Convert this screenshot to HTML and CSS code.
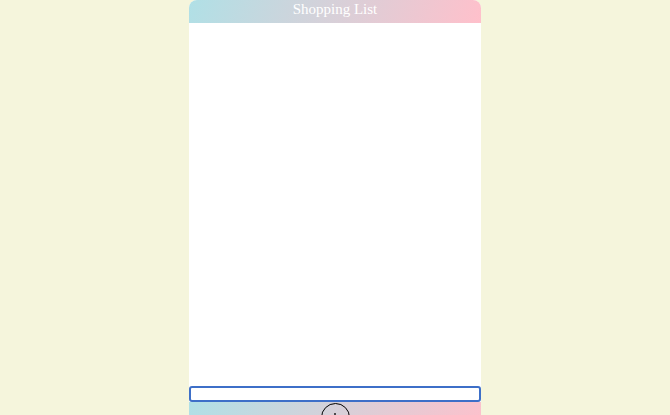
FILE: index.html
```html
<!DOCTYPE html>
<html>
<head>
<meta charset="utf-8">
<title>Shopping List</title>
<link rel="stylesheet" href="styles.css">
</head>
<body>
<div class="app">
  <header class="app-header">Shopping List</header>
  <ul class="items"></ul>
  <input class="new-item" type="text">
  <footer class="app-footer">
    <button class="add-btn" type="button" aria-label="Add item">
      <svg width="12" height="12" viewBox="0 0 12 12"><path d="M6 1v10M1 6h10" stroke="#111" stroke-width="1.4" fill="none"/></svg>
    </button>
  </footer>
</div>
</body>
</html>
```
FILE: styles.css
```css
html, body {
  margin: 0;
  padding: 0;
  background: #f5f5dc;
}
body {
  font-family: "Liberation Serif", "Times New Roman", serif;
}
.app {
  width: 292px;
  margin: 0 auto;
  display: flex;
  flex-direction: column;
  background: #ffffff;
  border-radius: 8px 8px 0 0;
}
.app-header {
  height: 23px;
  line-height: 19px;
  box-sizing: border-box;
  text-align: center;
  color: #ffffff;
  font-size: 15px;
  background: linear-gradient(110deg, #b0e0e6 0%, #ffc0cb 100%);
  border-radius: 8px 8px 0 0;
}
.items {
  margin: 0;
  padding: 0;
  list-style: none;
  height: 363px;
}
.new-item {
  box-sizing: border-box;
  width: 100%;
  height: 16px;
  margin: 0;
  padding: 0 2px;
  border: 2px solid #3d6fc8;
  border-radius: 3px;
  background: #fff;
  outline: none;
}
.app-footer {
  height: 50px;
  display: flex;
  justify-content: center;
  align-items: flex-start;
  background: linear-gradient(110deg, #b0e0e6 0%, #ffc0cb 100%);
}
.add-btn {
  width: 29px;
  height: 29px;
  margin-top: 1px;
  padding: 0;
  border: 1.5px solid #000;
  border-radius: 50%;
  background: transparent;
  display: flex;
  align-items: center;
  justify-content: center;
}
```
